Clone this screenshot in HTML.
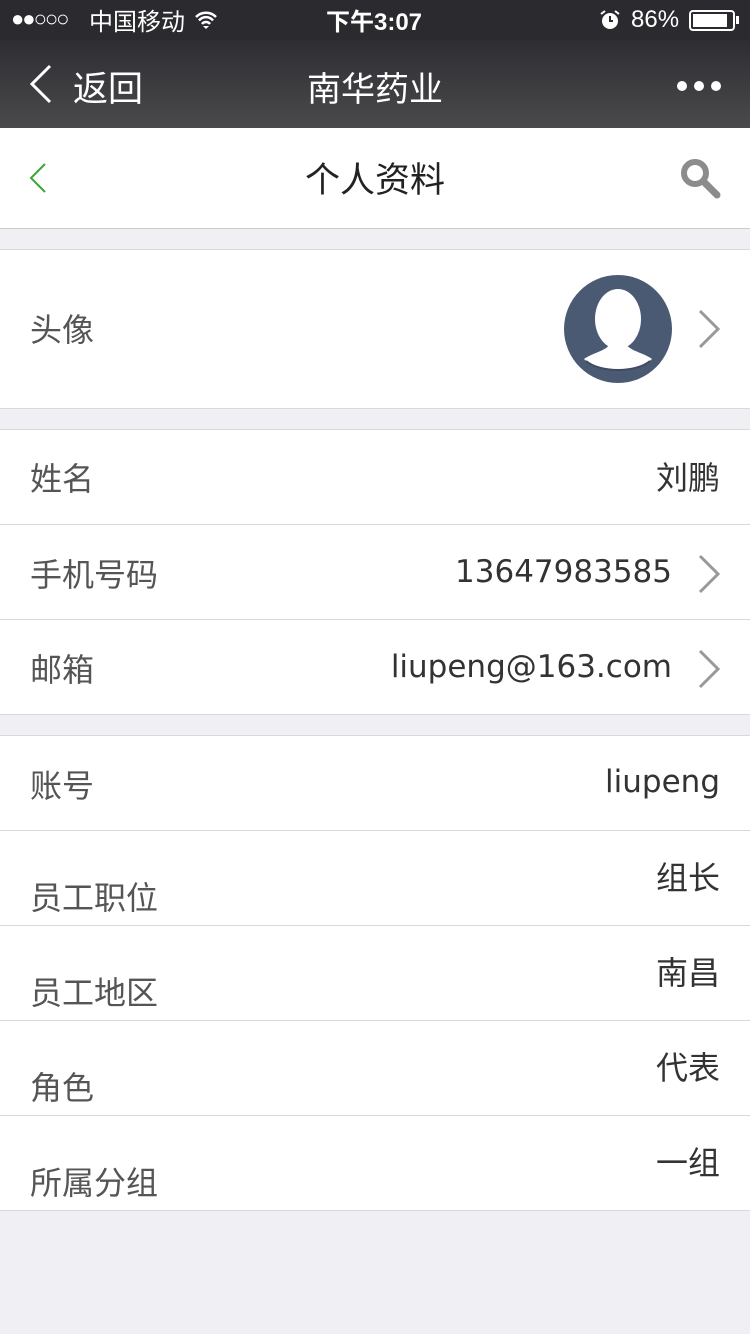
<!DOCTYPE html>
<html><head><meta charset="utf-8"><style>
*{margin:0;padding:0;box-sizing:border-box}
body{width:750px;height:1334px;background:#efeff4;font-family:"Liberation Sans","Noto Sans CJK SC",sans-serif;position:relative;overflow:hidden}
.sb{position:absolute;top:0;left:0;width:750px;height:40px;background:#2b2a2f;color:#fff;font-size:24px}
.nav{position:absolute;top:40px;left:0;width:750px;height:88px;background:linear-gradient(#2e2d32,#4a4a4c);color:#fff}
.hd{position:absolute;top:128px;left:0;width:750px;height:101px;background:#fff;border-bottom:1px solid #ccc}
.row{position:absolute;left:0;width:750px;background:#fff}
.lab{position:absolute;left:30px;font-size:32px;color:#555}
.val{position:absolute;right:30px;font-size:32px;color:#333}
.sep{position:absolute;left:0;width:750px;height:1px;background:#d9d9d9}
.chev{position:absolute;right:30px}
</style></head><body>
<div class="sb">
<div style="position:absolute;left:11px;top:6px;font-size:22px;letter-spacing:-2px;line-height:26px">●●○○○</div>
<div style="position:absolute;left:89px;top:2px">中国移动</div>
<svg style="position:absolute;left:194px;top:10px" width="24" height="20" viewBox="0 0 24 20"><path d="M2 7a14 14 0 0 1 20 0M5 10.5a9 9 0 0 1 14 0M8 14a5 5 0 0 1 8 0" stroke="#fff" stroke-width="2.5" fill="none"/><path d="M12 19l-3-3h6z" fill="#fff"/></svg>
<div style="position:absolute;left:326px;top:2px;font-weight:bold">下午3:07</div>
<svg style="position:absolute;left:599px;top:9px" width="22" height="22" viewBox="0 0 22 22"><circle cx="11" cy="12" r="8" fill="#fff"/><path d="M11 7v5h3" stroke="#2b2a2f" stroke-width="2" fill="none"/><path d="M2 5l4-3M20 5l-4-3" stroke="#fff" stroke-width="2"/></svg>
<div style="position:absolute;left:631px;top:6px">86%</div>
<div style="position:absolute;left:689px;top:10px;width:46px;height:21px;border:2px solid #fff;border-radius:4px"><div style="margin:2px;width:34px;height:13px;background:#fff"></div></div>
<div style="position:absolute;left:736px;top:16px;width:3px;height:8px;background:#fff"></div>
</div>
<div class="nav">
<svg style="position:absolute;left:28px;top:24px" width="26" height="40" viewBox="0 0 26 40"><path d="M22 2L4 20l18 18" stroke="#fff" stroke-width="3" fill="none"/></svg>
<div style="position:absolute;left:73px;top:21px;font-size:35px">返回</div>
<div style="position:absolute;left:0;width:750px;text-align:center;top:22px;font-size:34px">南华药业</div>
<div style="position:absolute;left:677px;top:38px"><span style="display:inline-block;width:10px;height:10px;border-radius:5px;background:#fff;margin-right:7px"></span><span style="display:inline-block;width:10px;height:10px;border-radius:5px;background:#fff;margin-right:7px"></span><span style="display:inline-block;width:10px;height:10px;border-radius:5px;background:#fff"></span></div>
</div>
<div class="hd">
<svg style="position:absolute;left:28px;top:34px" width="20" height="32" viewBox="0 0 20 32"><path d="M17 2L3 16l14 14" stroke="#3aa53a" stroke-width="2" fill="none"/></svg>
<div style="position:absolute;left:0;width:750px;text-align:center;top:24px;font-size:35px;color:#222">个人资料</div>
<svg style="position:absolute;left:680px;top:30px" width="42" height="42" viewBox="0 0 42 42"><circle cx="15" cy="15" r="11" stroke="#8c8c8c" stroke-width="6" fill="none"/><path d="M24 24l13 13" stroke="#8c8c8c" stroke-width="7" stroke-linecap="round"/></svg>
</div>

<div class="row" style="top:249px;height:160px;border-top:1px solid #d9d9d9;border-bottom:1px solid #d9d9d9">
<div class="lab" style="top:55px">头像</div>
<svg style="position:absolute;left:564px;top:25px" width="108" height="108" viewBox="0 0 108 108"><circle cx="54" cy="54" r="54" fill="#4b5a73"/><ellipse cx="54" cy="44" rx="23" ry="30" fill="#fff"/><path d="M20 84c10-7 24-8 28-18h12c4 10 18 11 28 18c-14 14-54 14-68 0z" fill="#fff"/><path d="M22 86c14 12 50 12 64 0" stroke="#3f4b60" stroke-width="2" fill="none"/></svg>
<svg class="chev" style="top:59px" width="22" height="40" viewBox="0 0 22 40"><path d="M2 2l18 18L2 38" stroke="#999" stroke-width="3" fill="none"/></svg>
</div>

<div class="row" style="top:429px;height:286px;border-top:1px solid #d9d9d9;border-bottom:1px solid #d9d9d9">
<div class="lab" style="top:24px">姓名</div><div class="val" style="top:23px">刘鹏</div>
<div class="sep" style="top:94px"></div>
<div class="lab" style="top:120px">手机号码</div><div class="val" style="top:124px;right:78px;font-family:'DejaVu Sans',sans-serif;font-size:31px">13647983585</div>
<svg class="chev" style="top:124px" width="22" height="40" viewBox="0 0 22 40"><path d="M2 2l18 18L2 38" stroke="#999" stroke-width="3" fill="none"/></svg>
<div class="sep" style="top:189px"></div>
<div class="lab" style="top:215px">邮箱</div><div class="val" style="top:219px;right:78px;font-family:'DejaVu Sans',sans-serif;font-size:31px">liupeng@163.com</div>
<svg class="chev" style="top:219px" width="22" height="40" viewBox="0 0 22 40"><path d="M2 2l18 18L2 38" stroke="#999" stroke-width="3" fill="none"/></svg>
</div>

<div class="row" style="top:735px;height:476px;border-top:1px solid #d9d9d9;border-bottom:1px solid #d9d9d9">
<div class="lab" style="top:25px">账号</div><div class="val" style="top:28px;font-family:'DejaVu Sans',sans-serif;font-size:31px">liupeng</div>
<div class="sep" style="top:94px"></div>
<div class="lab" style="top:137px">员工职位</div><div class="val" style="top:117px">组长</div>
<div class="sep" style="top:189px"></div>
<div class="lab" style="top:232px">员工地区</div><div class="val" style="top:212px">南昌</div>
<div class="sep" style="top:284px"></div>
<div class="lab" style="top:327px">角色</div><div class="val" style="top:307px">代表</div>
<div class="sep" style="top:379px"></div>
<div class="lab" style="top:422px">所属分组</div><div class="val" style="top:402px">一组</div>
</div>
</body></html>
